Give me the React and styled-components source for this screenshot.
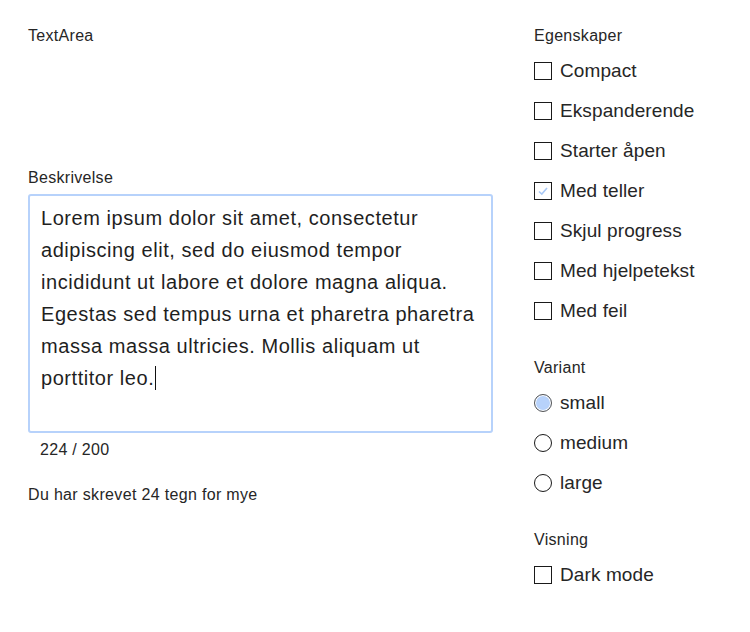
import React from "react";
import styled, { createGlobalStyle } from "styled-components";

const Global = createGlobalStyle`
  html, body { margin: 0; padding: 0; background: #fff; }
  body { font-family: "Liberation Sans", Arial, sans-serif; color: #262626; }
`;

const Page = styled.div`
  display: grid;
  grid-template-columns: 465px 1fr;
  column-gap: 41px;
  padding: 25px 0 0 28px;
`;

const LeftCol = styled.div`
  display: flex;
  flex-direction: column;
`;

const RightCol = styled.div`
  display: flex;
  flex-direction: column;
`;

const Title = styled.div`
  font-size: 16px;
  line-height: 22px;
  height: 22px;
  letter-spacing: 0.3px;
`;

const FieldLabel = styled.div`
  font-size: 16px;
  line-height: 22px;
  margin-top: 120px;
  margin-bottom: 5px;
  letter-spacing: 0.3px;
`;

const Area = styled.div`
  box-sizing: border-box;
  height: 239px;
  border: 2px solid #b7d2fb;
  border-radius: 3px;
  padding: 6px 11px 4px;
  font-size: 20px;
  line-height: 32px;
  letter-spacing: 0.55px;
  color: #1f1f1f;
  white-space: nowrap;
`;

const Caret = styled.span`
  display: inline-block;
  width: 1px;
  height: 24px;
  background: #111;
  vertical-align: -5px;
  margin-left: 1px;
`;

const Counter = styled.div`
  font-size: 16px;
  line-height: 22px;
  margin-top: 6px;
  padding-left: 12px;
  letter-spacing: 0.3px;
`;

const ErrorText = styled.div`
  font-size: 16px;
  line-height: 22px;
  margin-top: 23px;
  letter-spacing: 0.33px;
`;

const Group = styled.div`
  display: flex;
  flex-direction: column;
  margin-bottom: ${(p) => p.$gap || 0}px;
`;

const GroupTitle = styled.div`
  font-size: 16px;
  line-height: 22px;
  height: 22px;
  margin-bottom: 4px;
  letter-spacing: 0.3px;
`;

const Row = styled.label`
  display: flex;
  align-items: center;
  height: 40px;
  gap: 8px;
  font-size: 19px;
  letter-spacing: 0.1px;
`;

const Box = styled.span`
  box-sizing: border-box;
  width: 18px;
  height: 18px;
  border: 1.5px solid #1a1a1a;
  display: flex;
  align-items: center;
  justify-content: center;
`;

const Radio = styled.span`
  box-sizing: border-box;
  width: 18px;
  height: 18px;
  border-radius: 50%;
  border: 1.5px solid ${(p) => (p.$checked ? "#555" : "#1a1a1a")};
  background: ${(p) => (p.$checked ? "#b7d2fb" : "#fff")};
  box-shadow: ${(p) => (p.$checked ? "inset 0 0 0 1px #fff" : "none")};
`;

const Checkbox = ({ label, checked }) => (
  <Row>
    <Box>
      {checked && (
        <svg width="12" height="12" viewBox="0 0 12 12">
          <path d="M2 6.5 L4.8 9 L10 3" fill="none" stroke="#a9c9f7" strokeWidth="1.6" />
        </svg>
      )}
    </Box>
    {label}
  </Row>
);

const RadioRow = ({ label, checked }) => (
  <Row>
    <Radio $checked={checked} />
    {label}
  </Row>
);

export default function App() {
  return (
    <>
      <Global />
      <Page>
        <LeftCol>
          <Title>TextArea</Title>
          <FieldLabel>Beskrivelse</FieldLabel>
          <Area>
            Lorem ipsum dolor sit amet, consectetur<br />
            adipiscing elit, sed do eiusmod tempor<br />
            incididunt ut labore et dolore magna aliqua.<br />
            Egestas sed tempus urna et pharetra pharetra<br />
            massa massa ultricies. Mollis aliquam ut<br />
            porttitor leo.<Caret />
          </Area>
          <Counter>224 / 200</Counter>
          <ErrorText>Du har skrevet 24 tegn for mye</ErrorText>
        </LeftCol>
        <RightCol>
          <Group $gap={26}>
            <GroupTitle>Egenskaper</GroupTitle>
            <Checkbox label="Compact" />
            <Checkbox label="Ekspanderende" />
            <Checkbox label="Starter åpen" />
            <Checkbox label="Med teller" checked />
            <Checkbox label="Skjul progress" />
            <Checkbox label="Med hjelpetekst" />
            <Checkbox label="Med feil" />
          </Group>
          <Group $gap={26}>
            <GroupTitle>Variant</GroupTitle>
            <RadioRow label="small" checked />
            <RadioRow label="medium" />
            <RadioRow label="large" />
          </Group>
          <Group>
            <GroupTitle>Visning</GroupTitle>
            <Checkbox label="Dark mode" />
          </Group>
        </RightCol>
      </Page>
    </>
  );
}
